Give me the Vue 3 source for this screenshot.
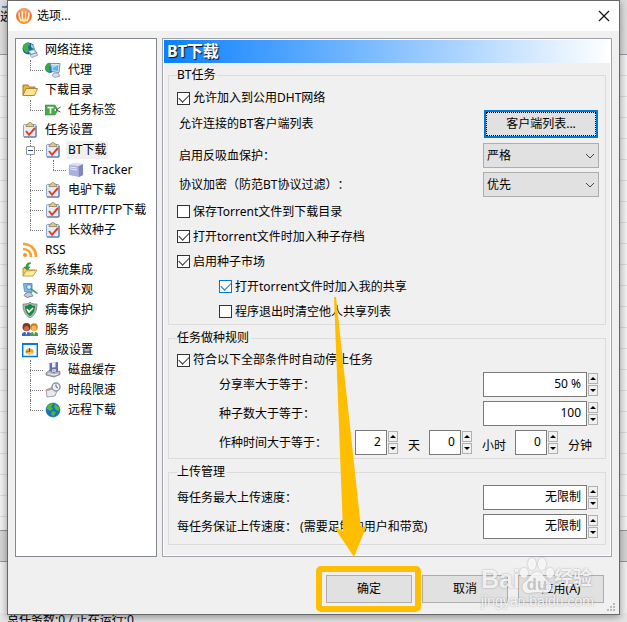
<template>
    <div class="desktop">
        <div class="app-window" aria-hidden="true">
            <div class="app-toolbar">
                <svg viewBox="0 0 12 12"><path d="M0 10c5 2 9 0 12-5" fill="none" stroke="#2367b8" stroke-width="2" /></svg>
                <span>选项</span>
            </div>
            <div class="app-list"></div>
            <div class="app-tabs"></div>
            <div class="app-info"></div>
            <div class="app-status">总任务数:0 / 正在运行:0</div>
        </div>

        <form class="dialog" @submit.prevent>
            <header class="titlebar">
                <svg class="logo" viewBox="0 0 16 16">
                    <defs>
                        <linearGradient id="ball" x1="0" y1="0" x2="0" y2="1">
                            <stop offset="0" stop-color="#f7b98a" />
                            <stop offset=".45" stop-color="#f0642a" />
                            <stop offset="1" stop-color="#ffb020" />
                        </linearGradient>
                    </defs>
                    <circle cx="8" cy="8" r="7.600" fill="url(#ball)" stroke="#d9642c" stroke-width=".6" />
                    <path d="M3.200 4.500v3c0 2 1 4 2 5.500M6.400 3.500v5c0 2 .3 3.500.8 5M9.600 3.500v5c0 2-.3 3.500-.8 5M12.800 4.500v3c0 2-1 4-2 5.500" fill="none" stroke="#fff3cf" stroke-width="1.700" />
                </svg>
                <h1>选项...</h1>
                <button type="button" class="close" aria-label="关闭">
                    <svg viewBox="0 0 12 12"><path d="M1 1l10 10M11 1L1 11" stroke="#111" stroke-width="1.200" /></svg>
                </button>
            </header>

            <div class="content">
                <ul class="tree">
                    <li v-for="item in tree" :key="item.text">
                        <a href="#" class="node" :class="{ active: item.text === selected }" @click.prevent="selected = item.text">
                            <svg viewBox="0 0 16 16" v-html="icons[item.icon]"></svg>
                            <span>{{ item.text }}</span>
                        </a>
                        <ul v-if="item.children" class="branch">
                            <li v-for="child in item.children" :key="child.text">
                                <button v-if="child.children" type="button" class="toggle" :class="{ opened }" aria-label="展开" @click="opened = !opened"></button>
                                <a href="#" class="node" :class="{ active: child.text === selected }" @click.prevent="selected = child.text">
                                    <svg viewBox="0 0 16 16" v-html="icons[child.icon]"></svg>
                                    <span>{{ child.text }}</span>
                                </a>
                                <ul v-if="child.children && opened" class="branch">
                                    <li v-for="leaf in child.children" :key="leaf.text">
                                        <a href="#" class="node" :class="{ active: leaf.text === selected }" @click.prevent="selected = leaf.text">
                                            <svg viewBox="0 0 16 16" v-html="icons[leaf.icon]"></svg>
                                            <span>{{ leaf.text }}</span>
                                        </a>
                                    </li>
                                </ul>
                            </li>
                        </ul>
                    </li>
                </ul>

                <section class="panel">
                    <h2>BT下载</h2>
                    <div class="groups">
                        <fieldset class="task">
                            <legend>BT任务</legend>
                            <label class="check first"><input type="checkbox" v-model="options.dht">允许加入到公用DHT网络</label>
                            <div class="row button-row">
                                <span>允许连接的BT客户端列表</span>
                                <button type="button" class="btn focused">客户端列表...</button>
                            </div>
                            <div class="row">
                                <label for="leech">启用反吸血保护：</label>
                                <div class="select">
                                    <select id="leech" v-model="options.leech">
                                        <option>严格</option>
                                        <option>普通</option>
                                    </select>
                                    <svg viewBox="0 0 10 6"><path d="M1 1l4 4 4-4" fill="none" stroke="#444" /></svg>
                                </div>
                            </div>
                            <div class="row">
                                <label for="crypt">协议加密（防范BT协议过滤）：</label>
                                <div class="select">
                                    <select id="crypt" v-model="options.crypt">
                                        <option>优先</option>
                                        <option>强制</option>
                                    </select>
                                    <svg viewBox="0 0 10 6"><path d="M1 1l4 4 4-4" fill="none" stroke="#444" /></svg>
                                </div>
                            </div>
                            <label class="check"><input type="checkbox" v-model="options.saveTorrent">保存Torrent文件到下载目录</label>
                            <label class="check"><input type="checkbox" v-model="options.archive">打开torrent文件时加入种子存档</label>
                            <label class="check"><input type="checkbox" v-model="options.market">启用种子市场</label>
                            <label class="check sub hot"><input type="checkbox" v-model="options.share">打开torrent文件时加入我的共享</label>
                            <label class="check sub"><input type="checkbox" v-model="options.clear">程序退出时清空他人共享列表</label>
                        </fieldset>

                        <fieldset class="seed">
                            <legend>任务做种规则</legend>
                            <label class="check"><input type="checkbox" v-model="options.autoStop">符合以下全部条件时自动停止任务</label>
                            <div class="row sub">
                                <label for="ratio">分享率大于等于：</label>
                                <div class="spin">
                                    <input id="ratio" type="text" :value="limits.ratio + ' %'">
                                    <span class="arrows">
                                        <button type="button" aria-label="增加" @click="step('ratio', 1)"></button>
                                        <button type="button" aria-label="减少" @click="step('ratio', -1)"></button>
                                    </span>
                                </div>
                            </div>
                            <div class="row sub">
                                <label for="seeds">种子数大于等于：</label>
                                <div class="spin">
                                    <input id="seeds" type="text" v-model="limits.seeds">
                                    <span class="arrows">
                                        <button type="button" aria-label="增加" @click="step('seeds', 1)"></button>
                                        <button type="button" aria-label="减少" @click="step('seeds', -1)"></button>
                                    </span>
                                </div>
                            </div>
                            <div class="row sub">
                                <label for="days">作种时间大于等于：</label>
                                <div class="times">
                                    <div v-for="part in timeParts" :key="part.id" class="time">
                                        <div class="spin small">
                                            <input :id="part.id" type="text" v-model="limits[part.id]">
                                            <span class="arrows">
                                                <button type="button" aria-label="增加" @click="step(part.id, 1)"></button>
                                                <button type="button" aria-label="减少" @click="step(part.id, -1)"></button>
                                            </span>
                                        </div>
                                        <label :for="part.id">{{ part.unit }}</label>
                                    </div>
                                </div>
                            </div>
                        </fieldset>

                        <fieldset class="upload">
                            <legend>上传管理</legend>
                            <div v-for="speed in speeds" :key="speed.id" class="row">
                                <label :for="speed.id">{{ speed.text }}</label>
                                <div class="spin">
                                    <input :id="speed.id" type="text" value="无限制">
                                    <span class="arrows">
                                        <button type="button" aria-label="增加"></button>
                                        <button type="button" aria-label="减少"></button>
                                    </span>
                                </div>
                            </div>
                        </fieldset>
                    </div>
                </section>
            </div>

            <footer class="footer">
                <div class="marked"><button type="submit" class="btn">确定</button></div>
                <button type="button" class="btn">取消</button>
                <button type="button" class="btn">应用(A)</button>
                <svg class="grip" viewBox="0 0 9 9"><path d="M6 0h2v2H6zM3 3h2v2H3zM6 3h2v2H6zM0 6h2v2H0zM3 6h2v2H3zM6 6h2v2H6z" fill="#bbb" /></svg>
            </footer>
        </form>

        <svg class="pointer" viewBox="0 0 34 260">
            <path d="M0 0L2 0L27 231L33 228L20 260L0 230L9 234Z" fill="#ffbf00" />
        </svg>

        <div class="watermark">
            <div class="brand">
                <span>Bai</span>
                <svg viewBox="0 0 34 36">
                    <ellipse cx="4" cy="15" rx="4" ry="5" />
                    <ellipse cx="12" cy="6" rx="4" ry="6" />
                    <ellipse cx="22" cy="6" rx="4" ry="6" />
                    <ellipse cx="30" cy="15" rx="4" ry="5" />
                    <path d="M17 14c6 0 7 7 12 10 5 4 2 11-3 11-4 0-6-1-9-1s-5 1-9 1c-5 0-8-7-3-11 5-3 6-10 12-10z" />
                    <text x="17" y="32" text-anchor="middle">du</text>
                </svg>
                <span class="cn">经验</span>
            </div>
            <div class="site">jingyan.baidu.com</div>
        </div>
    </div>
</template>

<script setup>
import { ref, reactive } from 'vue'

const selected = ref('BT下载')
const opened = ref(true)

const tree = [
    { text: '网络连接', icon: 'network', children: [{ text: '代理', icon: 'proxy' }] },
    { text: '下载目录', icon: 'folder', children: [{ text: '任务标签', icon: 'tag' }] },
    {
        text: '任务设置',
        icon: 'task',
        children: [
            { text: 'BT下载', icon: 'task', children: [{ text: 'Tracker', icon: 'server' }] },
            { text: '电驴下载', icon: 'task' },
            { text: 'HTTP/FTP下载', icon: 'task' },
            { text: '长效种子', icon: 'task' }
        ]
    },
    { text: 'RSS', icon: 'rss' },
    { text: '系统集成', icon: 'system' },
    { text: '界面外观', icon: 'look' },
    { text: '病毒保护', icon: 'shield' },
    { text: '服务', icon: 'users' },
    {
        text: '高级设置',
        icon: 'advanced',
        children: [
            { text: '磁盘缓存', icon: 'disk' },
            { text: '时段限速', icon: 'clock' },
            { text: '远程下载', icon: 'globe' }
        ]
    }
]

const icons = {
    network: '<circle cx="6.500" cy="6.500" r="6" fill="#1f5fb0"/><path d="M2 2.500c3-3 6-2 6 0L6 5l1 3-2 3C1 9 0 5 2 2.500zM9 2l3 3-2 2z" fill="#3cb53f"/><path d="M9 2c2 1 3 2 3 5l-3-2z" fill="#8fd0f4"/><path d="M6 9l6-2 3 4-6 2z" fill="#a9c7dc" stroke="#52748f" stroke-width=".7"/><path d="M8 9.500l3.500-1 1.500 2-3.500 1z" fill="#e5f5ff"/><path d="M8 13l6-2 2 2-6 2.500z" fill="#d5dfe8" stroke="#667f93" stroke-width=".6"/>',
    proxy: '<circle cx="5" cy="6" r="5" fill="#2372bd"/><path d="M2 2c2-2 4-1 5 0L4 5l1 4-2 1C0 8 0 4 2 2z" fill="#35ad37"/><path d="M5.500 1.500l9.500 0-1 9-7-1z" fill="#dce7f3" stroke="#7891b5"/><path d="M7 3l6.500 0-.7 6-4.800-.7z" fill="#56b4f0"/><path d="M7 3l6.500 0-5.800 3z" fill="#a5dcfb"/><path d="M9 11h4l2 3-5 1.500-3-2z" fill="#d7dce7" stroke="#8994a8" stroke-width=".8"/>',
    folder: '<path d="M1 13V3h5l1 2h6v3" fill="#e7b548" stroke="#a87820"/><path d="M1 13.500l3-7h11.500l-3 7z" fill="#ffe697" stroke="#b98424"/>',
    tag: '<path d="M0 3h10l3 5-3 5H0z" fill="#48ac49" stroke="#278332" stroke-width=".5"/><path d="M2.500 5.500h6M5.500 5.500v6" stroke="#fff" stroke-width="1.600"/><circle cx="10.500" cy="8" r="1" fill="#fff"/><path d="M11 8l4.500-3M11 8l4.500 2" fill="none" stroke="#555"/>',
    task: '<rect x="1.500" y="2.500" width="12.500" height="12.500" rx="1" fill="#e6edf8" stroke="#8fa3c4"/><path d="M2 15h12V4" fill="none" stroke="#4d68a0"/><path d="M4 4l1-2h1.500c0-2.500 3-2.500 3 0H11l1 2.500H4z" fill="#dfc98b" stroke="#85754f" stroke-width=".7"/><path d="M4 9l3 3.800 6-6.800" fill="none" stroke="#df3e20" stroke-width="2"/>',
    server: '<path d="M1 3l5-2 9 1v11l-4 2-10-2z" fill="#a9b0dc"/><path d="M10.500 4l4.500-2v11l-4 2z" fill="#7f88bd"/><path d="M1 3l5-2 9 1-4.500 2z" fill="#dde1f5"/><path d="M2 5l7 1M2 7l7 1" stroke="#e9ebf8"/>',
    rss: '<circle cx="3" cy="13" r="2" fill="#f6921e"/><path d="M1 7c5 0 8 3 8 8M1 2c8 0 13 5 13 13" fill="none" stroke="#f9a12b" stroke-width="2.600"/>',
    system: '<path d="M1 14V6h4l2 2h6v3" fill="#f1d36a" stroke="#a98021" stroke-width=".8"/><path d="M1 14l3-5 11-1-4 6z" fill="#fff097" stroke="#b48a26" stroke-width=".8"/><path d="M9 1C5 0 4 3 4 5H2l3 3 3-3H6c0-2 1-3 3-4z" fill="#29aa36" stroke="#167326" stroke-width=".5"/>',
    look: '<path d="M1.500 1.500l8.500 0v9l-7.500-1z" fill="#79bdec" stroke="#7790b2"/><path d="M4 11l4-1 3 4-6 1.500-3-2z" fill="#c4cad7" stroke="#7c879b"/><circle cx="7" cy="5" r="2.500" fill="#c9eefb" stroke="#438db9"/><path d="M9 6l7 5-1 1-6-4z" fill="#34a151"/>',
    shield: '<path d="M8 0c2 2 4 2 7 2 0 7-2 11-7 14C3 13 1 9 1 2c3 0 5 0 7-2z" fill="#aeb8b4" stroke="#68756e" stroke-width=".7"/><path d="M8 2c2 1 3 2 5 2 0 5-2 8-5 10-3-2-5-5-5-10 2 0 3-1 5-2z" fill="#16883b"/><path d="M5 7l2 3 4-4" fill="none" stroke="#fff" stroke-width="1.700"/>',
    users: '<circle cx="4.500" cy="5" r="4" fill="#743b21"/><circle cx="4.500" cy="6.500" r="2.500" fill="#d8653f"/><path d="M0 14v-2c1-3 8-3 9 0v2z" fill="#3a66c7"/><circle cx="12" cy="5" r="3.800" fill="#c8851f"/><circle cx="12" cy="6" r="2.500" fill="#ffb450"/><path d="M8 14v-2c1-3 7-3 8 0v2z" fill="#4d9a54"/><path d="M3.500 10l1 3 1-3M11 10l1 3 1-3" fill="#fff"/>',
    advanced: '<path d="M.7 2h14.600v12.500H.7z" fill="#f2f8ff" stroke="#0877d9" stroke-width="1.400"/><path d="M0 2h16" stroke="#0877d9" stroke-width="2"/><ellipse cx="7.500" cy="9.500" rx="4" ry="3" fill="#e9a728"/><path d="M7.500 6v4H4" fill="none" stroke="#74501b"/><path d="M4.500 11h6" stroke="#ffe796"/>',
    disk: '<path d="M1 11l4-3 10 1.500v3l-6 2.500-8-2z" fill="#b4b5ba" stroke="#666870" stroke-width=".7"/><path d="M4.500 1l8.500-1v9l-4 2-4.500-2z" fill="#6870a6"/><path d="M7 .5l3.500-.3v5L7 5.500z" fill="#eceef5"/><path d="M7 7h4v3H7z" fill="#c0c4d7"/><path d="M3 11.500l6 1.500 4-1" fill="none" stroke="#f2f2f2"/>',
    clock: '<path d="M1 8l7-3 4 4-2 5-8 1z" fill="#e4e9f2" stroke="#8390a8" stroke-width=".8"/><path d="M1 8.500l7-2" stroke="#e28b60" stroke-width="1.600"/><circle cx="11" cy="5" r="4" fill="#eef4f8" stroke="#8a98a5" stroke-width="1.500"/><path d="M11 2.500V5l2 1" fill="none" stroke="#667"/>',
    globe: '<circle cx="8" cy="8" r="7" fill="#1473c4" stroke="#196793" stroke-width=".6"/><path d="M3 3c2-2 4-2 5-1L6 5l2 2-3 2-3-2zM10 2l4 3v4l-3-1-2-3zM7 9l4 1-2 4-3-1z" fill="#50b937"/>'
}

const options = reactive({
    dht: true,
    leech: '严格',
    crypt: '优先',
    saveTorrent: false,
    archive: true,
    market: true,
    share: true,
    clear: false,
    autoStop: true
})

const limits = reactive({ ratio: 50, seeds: 100, days: 2, hours: 0, minutes: 0 })

const timeParts = [
    { id: 'days', unit: '天' },
    { id: 'hours', unit: '小时' },
    { id: 'minutes', unit: '分钟' }
]

const speeds = [
    { id: 'max', text: '每任务最大上传速度：' },
    { id: 'min', text: '每任务保证上传速度： (需要足够的用户和带宽)' }
]

function step(name, value) {
    limits[name] = Math.max(0, Number(limits[name]) + value)
}
</script>

<style>
body {
    margin: 0;
    background: #e4e4e4;
}
</style>

<style scoped>
* {
    box-sizing: border-box;
}
.desktop {
    position: relative;
    overflow: hidden;
    padding: 0 7px 8px;
    font: 12px/18px "Noto Sans", "Noto Sans CJK SC", sans-serif;
    text-spacing-trim: space-all;
    color: #000;
}
button, input, select {
    font: inherit;
    color: inherit;
    margin: 0;
    padding: 0;
    border-radius: 0;
}

/* Главное окно позади диалога */
.app-window {
    position: absolute;
    inset: 0;
    display: flex;
    flex-direction: column;
    background: #f0f0f0;
}
.app-toolbar {
    display: flex;
    flex-direction: column;
    height: 55px;
    background: #dedede;
    border-bottom: 1px solid #9b9ba3;
}
.app-toolbar svg {
    width: 12px;
    height: 8px;
}
.app-list {
    flex: 1;
    background: repeating-linear-gradient(#f2f2f2 0 20px, #dcdcdc 20px 21px);
}
.app-tabs {
    height: 32px;
    background: #d6d6d6;
    border: solid #95959d;
    border-width: 1px 0;
}
.app-info {
    height: 51px;
}
.app-status {
    height: 10px;
    padding-left: 7px;
    line-height: 14px;
    background: #e6e6e6;
}

.dialog {
    position: relative;
    background: #f0f0f0;
    border: 1px solid #686868;
    box-shadow: 0 2px 8px rgba(0, 0, 0, .4);
}
.titlebar {
    display: flex;
    align-items: center;
    height: 30px;
    padding: 0 9px 0 8px;
    background: #fff;
}
.logo {
    width: 16px;
    height: 16px;
}
h1 {
    flex: 1;
    margin: 0 0 0 5px;
    font-size: 12px;
    font-weight: 400;
}
.close {
    display: flex;
    border: 0;
    background: none;
}
.close svg {
    width: 12px;
    height: 12px;
}
.content {
    display: flex;
    gap: 5px;
    padding: 7px 7px 0;
}

.tree {
    flex: 0 0 142px;
    margin: 0;
    padding: 1px 0 0 6px;
    list-style: none;
    background: #fff;
    border: 1px solid #828790;
}
.tree ul {
    margin: 0;
    padding: 0 0 0 23px;
    list-style: none;
}
.node {
    display: flex;
    align-items: center;
    height: 20px;
    gap: 5px;
    color: inherit;
    text-decoration: none;
    white-space: nowrap;
}
.node svg {
    flex: none;
    width: 16px;
    height: 16px;
}
.node span {
    padding: 0 2px;
}
.node.active span {
    background: #f0f0f0;
}
.branch > li {
    position: relative;
}
.branch > li::before {
    content: "";
    position: absolute;
    left: -15px;
    top: 0;
    bottom: 0;
    border-left: 1px dotted #777;
}
.branch > li:last-child::before {
    bottom: auto;
    height: 10px;
}
.branch > li::after {
    content: "";
    position: absolute;
    left: -15px;
    top: 10px;
    width: 13px;
    border-top: 1px dotted #777;
}
.toggle {
    position: absolute;
    z-index: 1;
    left: -19px;
    top: 6px;
    width: 9px;
    height: 9px;
    border: 1px solid #919191;
    border-radius: 1px;
    background: linear-gradient(#2447a0, #2447a0) center / 5px 1px no-repeat, linear-gradient(#2447a0, #2447a0) center / 1px 5px no-repeat, #fff;
}
.toggle.opened {
    background: linear-gradient(#2447a0, #2447a0) center / 5px 1px no-repeat, #fff;
}

.panel {
    flex: 1;
    min-width: 0;
    padding: 1px;
    border: 1px solid #a0a3aa;
    box-shadow: inset 0 0 0 1px #fff;
}
h2 {
    height: 23px;
    margin: 0;
    padding-left: 3px;
    background: linear-gradient(90deg, #0a80ff, #fff);
    color: #fff;
    font-size: 16px;
    line-height: 23px;
    text-shadow: 1px 1px 1px #111;
}
.groups {
    display: flex;
    flex-direction: column;
    gap: 4px;
    padding: 3px 4px 10px;
}
fieldset {
    min-width: 0;
    margin: 0;
    padding: 2px 6px 0 8px;
    border: 1px solid #dcdcdc;
}
legend {
    height: 18px;
    padding: 0 2px 0 0;
}
.check {
    display: flex;
    align-items: center;
    gap: 3px;
    height: 25px;
}
.check.first {
    height: 24px;
}
.check input {
    appearance: none;
    display: grid;
    place-items: center;
    width: 13px;
    height: 13px;
    border: 1px solid #333;
    background: #fff;
}
.check input:checked::after {
    content: "";
    width: 9px;
    height: 5px;
    margin-top: -3px;
    border: solid #333;
    border-width: 0 0 1px 1px;
    transform: rotate(-45deg);
}
.check.hot input {
    border-color: #0078d7;
}
.check.hot input:checked::after {
    border-color: #0078d7;
}
.sub {
    padding-left: 42px;
}
.row {
    display: flex;
    align-items: center;
    justify-content: space-between;
    height: 29px;
    white-space: nowrap;
}
.task .row {
    padding-left: 2px;
}
.task .button-row {
    height: 28px;
    margin-bottom: 3px;
}
.btn {
    width: 86px;
    height: 28px;
    border: 1px solid #adadad;
    background: #e1e1e1;
}
.btn.focused {
    width: 114px;
    margin-right: 1px;
    border: 2px solid #0078d7;
    outline: 1px dotted #000;
    outline-offset: -3px;
}
.select {
    position: relative;
    width: 116px;
    height: 25px;
}
.select select {
    appearance: none;
    width: 100%;
    height: 100%;
    padding: 0 20px 0 3px;
    border: 1px solid #adadad;
    background: #e1e1e1;
}
.select svg {
    position: absolute;
    right: 4px;
    top: 10px;
    width: 10px;
    height: 6px;
    pointer-events: none;
}

.seed {
    padding-top: 3px;
    padding-bottom: 1px;
}
.seed .check {
    height: 20px;
}
.upload {
    padding-bottom: 3px;
}
.spin {
    display: flex;
    gap: 1px;
    height: 25px;
    margin-right: 1px;
}
.spin input {
    width: 104px;
    padding: 0 5px 2px;
    border: 1px solid #7a7a7a;
    background: #fff;
    text-align: right;
}
.spin.small input {
    width: 32px;
}
.arrows {
    display: flex;
    flex-direction: column;
    justify-content: center;
    gap: 1px;
    width: 10px;
}
.arrows button {
    display: grid;
    place-items: center;
    width: 10px;
    height: 11px;
    border: 1px solid #b0b0b0;
    background: #f0f0f0;
}
.arrows button::before {
    content: "";
    border: solid transparent;
    border-width: 0 3px 3px;
    border-bottom-color: #000;
}
.arrows button:last-child::before {
    border-width: 3px 3px 0;
    border-top-color: #000;
}
.times {
    display: flex;
    gap: 9px;
    padding-right: 7px;
}
.time {
    display: flex;
    align-items: flex-end;
    gap: 9px;
}

.footer {
    display: flex;
    align-items: center;
    justify-content: flex-end;
    gap: 10px;
    height: 57px;
    padding: 6px 15px 0 0;
}
.marked {
    position: relative;
    display: flex;
}
.marked::after {
    content: "";
    position: absolute;
    inset: -9px -9px -9px -10px;
    border: 6px solid #ffbf00;
    border-radius: 5px;
    pointer-events: none;
}
.grip {
    position: absolute;
    right: 3px;
    bottom: 2px;
    width: 9px;
    height: 9px;
}

.pointer {
    position: absolute;
    left: 334px;
    top: 297px;
    width: 34px;
    height: 260px;
    pointer-events: none;
}
.watermark {
    position: absolute;
    right: 31px;
    bottom: 15px;
    width: 115px;
    color: rgba(255, 255, 255, .85);
    font-family: "Liberation Sans", "Noto Sans CJK SC", sans-serif;
    text-shadow: 0 0 2px rgba(0, 0, 0, .35);
    pointer-events: none;
}
.brand {
    display: flex;
    align-items: flex-end;
    height: 38px;
    font-size: 25px;
    font-weight: 700;
    line-height: 30px;
}
.brand svg {
    flex: none;
    width: 34px;
    height: 36px;
    fill: rgba(255, 255, 255, .85);
    filter: drop-shadow(0 0 1px rgba(0, 0, 0, .3));
}
.brand text {
    fill: #c4c4c4;
    font-size: 17px;
    text-shadow: none;
}
.brand .cn {
    font-size: 19px;
    white-space: nowrap;
}
.site {
    font-size: 14px;
    line-height: 14px;
}
</style>
